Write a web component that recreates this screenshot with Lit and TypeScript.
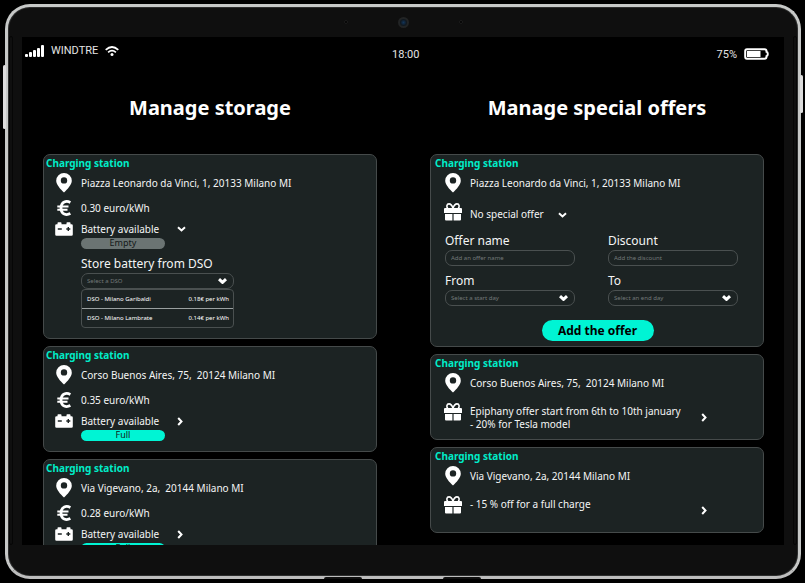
import { LitElement, html, css, svg, nothing, type TemplateResult } from "lit";
import { customElement } from "lit/decorators.js";
import { classMap } from "lit/directives/class-map.js";

const pin = html`<svg class="pin" viewBox="0 0 16 20" width="16" height="20" aria-hidden="true">
  <path fill="currentColor" fill-rule="evenodd" d="M8 0a7.8 7.8 0 0 0-7.8 7.8C.2 11.600 4.500 16.400 8 19.500c3.500-3.100 7.800-7.900 7.800-11.700A7.800 7.800 0 0 0 8 0Zm0 4.200a3.200 3.200 0 1 1 0 6.400 3.200 3.200 0 0 1 0-6.400Z"/>
</svg>`;

const euro = html`<svg viewBox="0 0 14 16" width="14" height="16" aria-hidden="true">
  <path fill="none" stroke="currentColor" stroke-width="2.800" d="M13.400 2.400C9.400.400 4.200 1.300 4 8c.2 6.700 5.400 7.600 9.400 5.600"/>
  <path fill="none" stroke="currentColor" stroke-width="1.900" d="M0.300 6.500H11.500M0.300 9.700H10.500"/>
</svg>`;

const battery = html`<svg viewBox="0 0 18 14" width="18" height="14" aria-hidden="true">
  <path fill="currentColor" d="M2.500 1q0-.8.8-.8h2.400q.8 0 .8.800v1.200h5V1q0-.8.8-.8h2.400q.8 0 .8.800v1.200h1q1.300 0 1.300 1.300v9q0 1.300-1.300 1.300H1.500Q.2 13.800.2 12.500v-9q0-1.300 1.300-1.300h1Z"/>
  <path class="ink" d="M2.800 7h4M11.300 7h4M13.300 5v4"/>
</svg>`;

const gift = html`<svg viewBox="0 0 18 18" width="18" height="18" aria-hidden="true">
  <path fill="none" stroke="currentColor" stroke-width="1.600" d="M9 5.200C8.200 2.800 6.800.9 5 .9c-2.400 0-2.800 3.100-1.200 4.300M9 5.200C9.800 2.800 11.200.9 13 .9c2.400 0 2.800 3.100 1.200 4.300"/>
  <path fill="currentColor" d="M1 5h16q1 0 1 1v4H0V6q0-1 1-1ZM1 11h7.400v6.500H2q-1 0-1-1ZM9.600 11H17v5.500q0 1-1 1H9.600Z"/>
</svg>`;

const chevronDown = html`<svg class="chevron" viewBox="0 0 9 6" width="9" height="6" aria-hidden="true">
  <path d="M1 1.200 4.500 4.400 8 1.200"/>
</svg>`;

const chevronRight = html`<svg class="chevron" viewBox="0 0 6 9" width="6" height="9" aria-hidden="true">
  <path d="M1.200 1 4.500 4.500 1.200 8"/>
</svg>`;

const signal = html`<svg viewBox="0 0 19 12" width="19" height="12" aria-hidden="true">
  ${[3, 5, 7, 9, 12].map((h, i) => svg`<rect x=${i * 4} y=${12 - h} width="3" height=${h} rx="1" fill="currentColor"/>`)}
</svg>`;

const wifi = html`<svg viewBox="0 0 14 10" width="14" height="10" aria-hidden="true">
  <path fill="none" stroke="currentColor" stroke-width="1.700" d="M.7 3.900Q7-1.900 13.300 3.900M3.100 6.400Q7 2.900 10.900 6.400"/>
  <circle cx="7" cy="8.400" r="1.500" fill="currentColor"/>
</svg>`;

const charge = html`<svg viewBox="0 0 25 12" width="25" height="12" aria-hidden="true">
  <path fill="none" stroke="currentColor" stroke-width="2" d="M3 1.200h17.500q2 0 2 2v.6q1.300.3 1.300 2.200t-1.300 2.200v.6q0 2-2 2H3q-1.800 0-1.800-2V3.200q0-2 1.800-2Z"/>
  <path fill="currentColor" d="M3 3H16.500v6H3Z"/>
</svg>`;

interface Storage {
  address: string;
  price: string;
  state: "Empty" | "Full";
  open?: boolean;
}

interface Offer {
  address: string;
  lines: string[];
  open?: boolean;
}

const storages: Storage[] = [
  { address: "Piazza Leonardo da Vinci, 1, 20133 Milano MI", price: "0.30 euro/kWh", state: "Empty", open: true },
  { address: "Corso Buenos Aires, 75,\u00a0 20124 Milano MI", price: "0.35 euro/kWh", state: "Full" },
  { address: "Via Vigevano, 2a,\u00a0 20144 Milano MI", price: "0.28 euro/kWh", state: "Full" },
];

const offers: Offer[] = [
  { address: "Piazza Leonardo da Vinci, 1, 20133 Milano MI", lines: ["No special offer"], open: true },
  {
    address: "Corso Buenos Aires, 75,\u00a0 20124 Milano MI",
    lines: ["Epiphany offer start from 6th to 10th january", "- 20% for Tesla model"],
  },
  { address: "Via Vigevano, 2a, 20144 Milano MI", lines: ["- 15 % off for a full charge"] },
];

const operators = [
  { name: "DSO - Milano Garibaldi", price: "0.18€ per kWh" },
  { name: "DSO - Milano Lambrate", price: "0.14€ per kWh" },
];

@customElement("app-root")
export class AppRoot extends LitElement {
  static styles = css`
    :host {
      display: flex;
      box-sizing: border-box;
      height: 100vh;
      padding: 4px 4px 4px 5px;
      background: #000;
      color: #f4f5f5;
      font: 10px/13px "Noto Sans", sans-serif;
    }
    * { box-sizing: border-box; }
    h1, h2, p, ul { margin: 0; padding: 0; }
    ul { list-style: none; }
    svg { display: block; flex: none; }
    button, input, select { font: inherit; color: inherit; margin: 0; }
    button { background: none; border: 0; padding: 0; cursor: pointer; }

    .tablet {
      position: relative;
      flex: 1;
      min-width: 0;
      display: flex;
      flex-direction: column;
      border: 3px solid #c6c8c7;
      border-bottom-color: #bdbdbd;
      border-radius: 25px;
      background: #0f0f0f;
      box-shadow: inset 0 0 0 1px #2c2d2d;
      padding: 0 14px 31px;
    }
    .key { position: absolute; width: 3px; border-radius: 2px; background: #dcdcdc; }
    .key.left { left: -5px; top: 58px; height: 64px; }
    .key.right { right: -5px; top: 68px; height: 38px; }
    .slot { position: absolute; bottom: -3px; width: 38px; height: 2px; border-radius: 2px 2px 0 0; background: #101010; }
    .slot.first { left: 40%; }
    .slot.second { left: 55%; }
    .rail { position: absolute; top: 29px; bottom: 31px; width: 4px; border: 1px solid #060606; border-radius: 3px; }
    .rail.left { left: 1px; }
    .rail.right { right: 1px; }

    .camera { height: 30px; flex: none; display: flex; align-items: center; justify-content: center; gap: 50px; }
    .lens {
      width: 11px;
      height: 11px;
      border-radius: 50%;
      border: 2px solid #222425;
      background: radial-gradient(circle, #12355a 0, #101820 60%);
    }
    .sensor { width: 4px; height: 4px; border-radius: 50%; background: #000; border: 1px solid #1d1d1d; }

    .screen { flex: 1; min-height: 0; overflow: hidden; background: #000; display: flex; flex-direction: column; }
    .status {
      flex: none;
      display: grid;
      grid-template-columns: 21fr auto 20fr;
      align-items: center;
      height: 28px;
      padding: 0 15px 0 3px;
      font: 11px/13px Roboto, sans-serif;
      color: #e4e4e4;
    }
    .carrier, .power { display: flex; align-items: center; gap: 7px; }
    .carrier { align-self: start; padding-top: 7px; }
    .clock, .power { padding-top: 6px; }
    .power { justify-content: flex-end; }
    .carrier svg, .power svg { color: #fff; }

    .columns { flex: none; display: flex; gap: 53px; padding: 28px 20px 0 21px; }
    .column { flex: 1; min-width: 0; display: flex; flex-direction: column; gap: 7px; }
    h1 { font-size: 20px; line-height: 30px; font-weight: 700; color: #fff; text-align: center; margin-bottom: 24px; }

    .card { border: 1px solid #454a4a; border-radius: 7px; background: #1c2323; padding-left: 2px; }
    .offers .card { padding-left: 4px; }
    h2 { font-size: 10px; line-height: 16px; font-weight: 700; color: #00ecc8; }
    .row { display: grid; grid-template-columns: 18px 1fr; column-gap: 8px; align-items: center; padding-left: 9px; }
    .row > svg { justify-self: center; color: #fff; }
    .address { height: 25px; }
    .address > .pin { align-self: start; margin-top: 2px; }
    .price { height: 24px; }
    .stock { height: 18px; }
    .toggle { display: flex; align-items: center; gap: 14px; justify-self: start; text-align: left; }
    .stock .text { min-width: 82px; }
    .chevron { fill: none; stroke: #fff; stroke-width: 2; }
    .ink { fill: none; stroke: #1c2323; stroke-width: 1.400; }

    .inset { padding-left: 35px; }
    .pill {
      width: 84px;
      height: 11px;
      border-radius: 6px;
      background: #6b7473;
      color: #141919;
      font-size: 9px;
      line-height: 10px;
      text-align: center;
      margin-bottom: 10px;
    }
    .pill.full { background: #00f4d4; }
    .store { width: 153px; margin: -4px 0 10px; }

    .label { display: block; font-size: 12px; line-height: 18px; }
    .field {
      display: block;
      width: 100%;
      height: 16px;
      border: 1px solid #4a5050;
      border-radius: 7px;
      padding: 0 5px;
      background: transparent;
      color: #737979;
      font-size: 6px;
      line-height: 14px;
      appearance: none;
      outline: none;
    }
    .field::placeholder { color: #737979; opacity: 1; }
    .picker { display: grid; align-items: center; }
    .picker > * { grid-area: 1 / 1; }
    .picker svg { justify-self: end; margin-right: 7px; pointer-events: none; stroke-width: 3; }
    .list { border: 1px solid #4a5050; border-radius: 4px; font-size: 6px; line-height: 18px; color: #fff; }
    .list li { display: flex; justify-content: space-between; padding: 0 4px 0 5px; }
    .list li + li { border-top: 1px solid #9aa0a0; }

    .deal { align-items: start; height: 43px; }
    .deal > svg { margin-top: 7px; }
    .deal .toggle { height: 100%; align-items: start; }
    .deal .toggle.wide { width: 237px; justify-content: space-between; }
    .deal .text { padding-top: 9px; }
    .deal .chevron { align-self: center; }
    .deal.open { height: 34px; }
    .deal.open .toggle { padding-top: 3px; }
    .line { display: block; }

    .form { display: grid; grid-template-columns: 130px 130px; justify-content: space-between; row-gap: 6px; padding: 2px 25px 5px 10px; }
    .submit {
      grid-column: 1 / -1;
      justify-self: center;
      width: 112px;
      height: 21px;
      margin: 8px 0 0 12px;
      border-radius: 11px;
      background: #00f4d4;
      color: #000;
      font-size: 12px;
      line-height: 18px;
      font-weight: 700;
    }
  `;

  private picker(id: string, hint: string): TemplateResult {
    return html`<div class="picker">
      <select class="field" id=${id}><option>${hint}</option></select>
      ${chevronDown}
    </div>`;
  }

  private storageCard(s: Storage): TemplateResult {
    return html`<article class="card">
      <h2>Charging station</h2>
      <div class="row address">${pin}<span>${s.address}</span></div>
      <div class="row price">${euro}<span>${s.price}</span></div>
      <div class="row stock">
        ${battery}
        <button class="toggle" type="button" aria-expanded=${s.open ? "true" : "false"}>
          <span class="text">Battery available</span>${s.open ? chevronDown : chevronRight}
        </button>
      </div>
      <div class="inset">
        <p class=${classMap({ pill: true, full: s.state === "Full" })}>${s.state}</p>
        ${s.open
          ? html`<div class="store">
              <label class="label" for="dso">Store battery from DSO</label>
              ${this.picker("dso", "Select a DSO")}
              <ul class="list">
                ${operators.map((o) => html`<li><span>${o.name}</span><span>${o.price}</span></li>`)}
              </ul>
            </div>`
          : nothing}
      </div>
    </article>`;
  }

  private offerCard(o: Offer): TemplateResult {
    return html`<article class="card">
      <h2>Charging station</h2>
      <div class="row address">${pin}<span>${o.address}</span></div>
      <div class=${classMap({ row: true, deal: true, open: !!o.open })}>
        ${gift}
        <button class=${classMap({ toggle: true, wide: !o.open })} type="button" aria-expanded=${o.open ? "true" : "false"}>
          <span class="text">${o.lines.map((l) => html`<span class="line">${l}</span>`)}</span>
          ${o.open ? chevronDown : chevronRight}
        </button>
      </div>
      ${o.open
        ? html`<form class="form" @submit=${(e: Event) => e.preventDefault()}>
            <div>
              <label class="label" for="name">Offer name</label>
              <input class="field" id="name" placeholder="Add an offer name" />
            </div>
            <div>
              <label class="label" for="discount">Discount</label>
              <input class="field" id="discount" placeholder="Add the discount" />
            </div>
            <div>
              <label class="label" for="from">From</label>
              ${this.picker("from", "Select a start day")}
            </div>
            <div>
              <label class="label" for="to">To</label>
              ${this.picker("to", "Select an end day")}
            </div>
            <button class="submit" type="submit">Add the offer</button>
          </form>`
        : nothing}
    </article>`;
  }

  render() {
    return html`<div class="tablet">
      <span class="key left"></span><span class="key right"></span>
      <span class="slot first"></span><span class="slot second"></span>
      <span class="rail left"></span><span class="rail right"></span>
      <div class="camera"><span class="sensor"></span><span class="lens"></span><span class="sensor"></span></div>
      <main class="screen">
        <header class="status">
          <span class="carrier">${signal}<span>WINDTRE</span>${wifi}</span>
          <span class="clock">18:00</span>
          <span class="power"><span>75%</span>${charge}</span>
        </header>
        <div class="columns">
          <section class="column"><h1>Manage storage</h1>${storages.map((s) => this.storageCard(s))}</section>
          <section class="column offers"><h1>Manage special offers</h1>${offers.map((o) => this.offerCard(o))}</section>
        </div>
      </main>
    </div>`;
  }
}
